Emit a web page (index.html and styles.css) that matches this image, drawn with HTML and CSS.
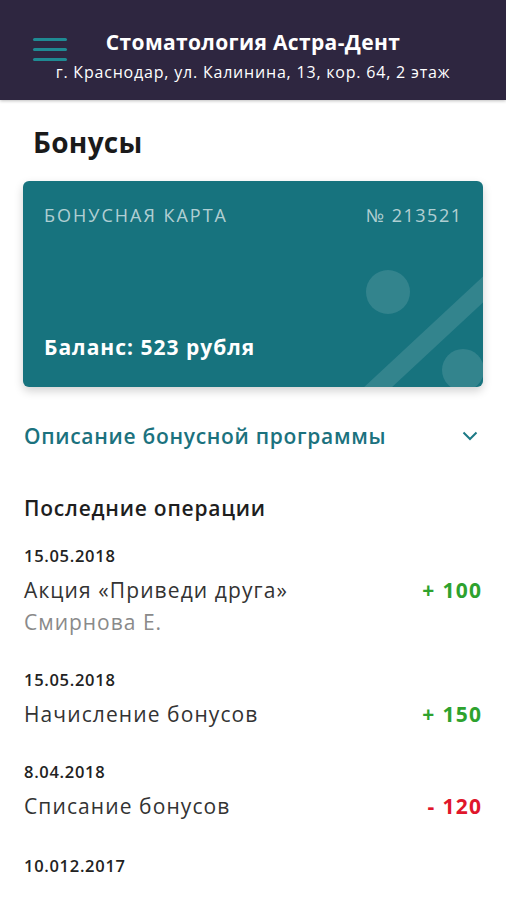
FILE: index.html
```html
<!DOCTYPE html>
<html lang="ru">

<head>
    <meta charset="UTF-8">
    <meta name="viewport" content="width=device-width, initial-scale=1.0">
    <title>Бонусы</title>
    <link rel="stylesheet" href="styles.css">
</head>

<body>
    <div class="header">
        <div class="menuBtn">
            <span></span>
            <span></span>
            <span></span>
        </div>
        <div class="clinic">
            <div class="clinicName">Стоматология Астра-Дент</div>
            <div class="clinicAddr">г. Краснодар, ул. Калинина, 13, кор. 64, 2 этаж</div>
        </div>
    </div>

    <div class="content">
        <h1 class="pageTitle">Бонусы</h1>

        <div class="card">
            <svg class="cardDecor" width="130" height="130" viewBox="0 0 130 130">
                <circle cx="35" cy="35" r="22" fill="#fff" fill-opacity=".12" />
                <line x1="-5" y1="158" x2="150" y2="14" stroke="#fff" stroke-opacity=".12" stroke-width="19" />
                <circle cx="110" cy="113" r="21" fill="#fff" fill-opacity=".12" />
            </svg>
            <div class="cardTop">
                <span class="cardLabel">БОНУСНАЯ КАРТА</span>
                <span class="cardNum">№ 213521</span>
            </div>
            <div class="cardBalance">Баланс: 523 рубля</div>
        </div>

        <div class="program">
            <span>Описание бонусной программы</span>
            <svg width="16" height="10" viewBox="0 0 16 10">
                <polyline points="1.5,1.5 8,8 14.5,1.5" fill="none" stroke="#1c7a86" stroke-width="2" />
            </svg>
        </div>

        <h2 class="opsTitle">Последние операции</h2>

        <div class="ops">
            <div class="op">
                <div class="opDate">15.05.2018</div>
                <div class="opRow">
                    <span>Акция «Приведи друга»</span>
                    <span class="plus">+ 100</span>
                </div>
                <div class="opSub">Смирнова Е.</div>
            </div>
            <div class="op">
                <div class="opDate">15.05.2018</div>
                <div class="opRow">
                    <span>Начисление бонусов</span>
                    <span class="plus">+ 150</span>
                </div>
            </div>
            <div class="op">
                <div class="opDate">8.04.2018</div>
                <div class="opRow">
                    <span>Списание бонусов</span>
                    <span class="minus">- 120</span>
                </div>
            </div>
            <div class="op">
                <div class="opDate">10.012.2017</div>
            </div>
        </div>
    </div>
</body>

</html>
```

FILE: styles.css
```css
* {
    margin: 0;
    padding: 0;
    box-sizing: border-box;
}

body {
    width: 506px;
    height: 900px;
    overflow: hidden;
    background-color: #fff;
    font-family: "Open Sans", "Liberation Sans", sans-serif;
    color: #2b2b2b;
}

.header {
    position: relative;
    height: 100px;
    background-color: #2e2640;
    box-shadow: 0 1px 3px rgba(0, 0, 0, .25);
    display: flex;
    justify-content: center;
    padding-top: 28px;
}

.menuBtn {
    position: absolute;
    left: 33px;
    top: 38px;
    width: 34px;
    display: flex;
    flex-direction: column;
    gap: 7px;
}

.menuBtn span {
    height: 3px;
    background-color: #1f8a93;
    border-radius: 2px;
}

.clinic {
    text-align: center;
    color: #fff;
}

.clinicName {
    font-size: 21px;
    font-weight: 700;
    line-height: 28px;
    letter-spacing: .35px;
}

.clinicAddr {
    font-size: 16px;
    line-height: 22px;
    margin-top: 5px;
    letter-spacing: .8px;
}

.content {
    padding: 0 23px 0 24px;
}

.pageTitle {
    font-size: 28px;
    font-weight: 700;
    line-height: 32px;
    letter-spacing: .3px;
    margin: 26px 0 0 9px;
    color: #1a1a1a;
}

.card {
    position: relative;
    overflow: hidden;
    height: 206px;
    margin: 23px 0 0 -1px;
    padding: 22px 22px 0 21px;
    background-color: #17737e;
    border-radius: 6px;
    box-shadow: 0 4px 10px rgba(0, 0, 0, .18);
    display: flex;
    flex-direction: column;
    justify-content: space-between;
}

.cardDecor {
    position: absolute;
    right: 0;
    bottom: 0;
}

.cardTop {
    position: relative;
    display: flex;
    justify-content: space-between;
    font-size: 18px;
    line-height: 24px;
    color: rgba(255, 255, 255, .68);
}

.cardLabel {
    letter-spacing: 2px;
}

.cardNum {
    letter-spacing: 1.5px;
    margin-right: -1.5px;
}

.cardBalance {
    position: relative;
    font-size: 21px;
    font-weight: 700;
    line-height: 28px;
    letter-spacing: 1px;
    color: #fff;
    margin-bottom: 26px;
}

.program {
    display: flex;
    justify-content: space-between;
    align-items: center;
    margin-top: 35px;
    height: 28px;
    color: #1b727e;
    font-size: 21px;
    font-weight: 600;
    letter-spacing: .7px;
}

.program svg {
    margin-right: 5px;
}

.opsTitle {
    font-size: 21px;
    font-weight: 600;
    line-height: 28px;
    letter-spacing: .78px;
    margin-top: 44px;
    color: #1e1e1e;
}

.ops {
    margin-top: 24px;
    display: flex;
    flex-direction: column;
    gap: 34px;
}

.op:last-child {
    margin-top: 2px;
}

.opDate {
    font-size: 16.5px;
    font-weight: 600;
    line-height: 20px;
    letter-spacing: .7px;
    color: #222;
}

.opRow {
    display: flex;
    justify-content: space-between;
    margin-top: 10px;
    font-size: 21px;
    line-height: 28px;
    letter-spacing: 1.1px;
    color: #333;
}

.opSub {
    font-size: 21px;
    line-height: 28px;
    letter-spacing: 1px;
    margin-top: 4px;
    color: #8a8a8a;
}

.plus,
.minus {
    font-weight: 700;
    font-size: 21px;
    letter-spacing: 1.3px;
    margin-right: .7px;
}

.plus {
    color: #2ea22e;
}

.minus {
    color: #e0162b;
}
```
